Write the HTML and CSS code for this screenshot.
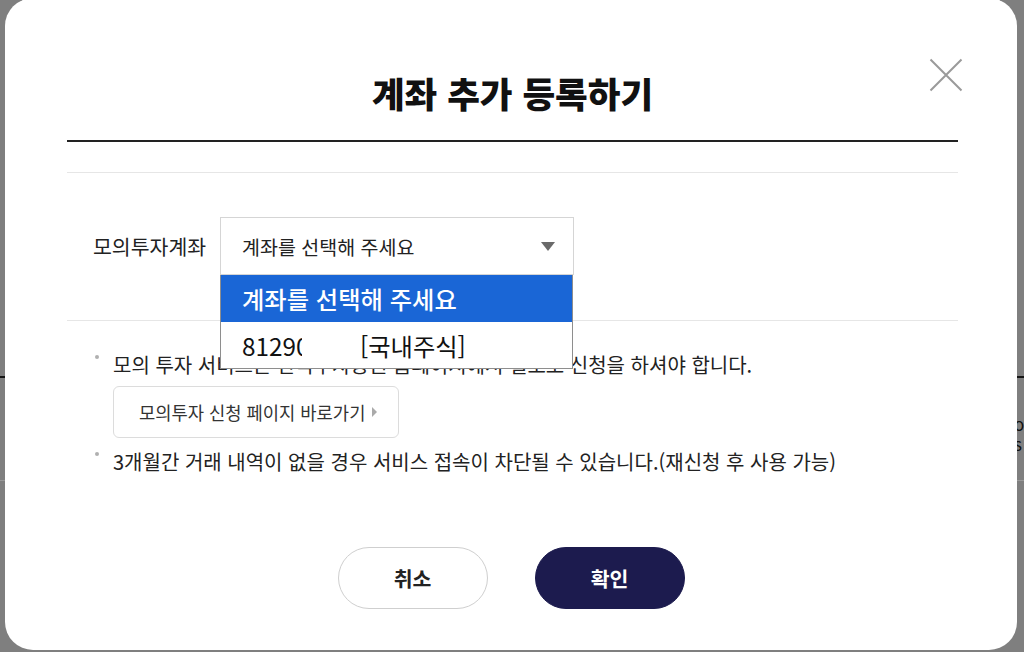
FILE: index.html
```html
<!DOCTYPE html>
<html lang="ko">
<head>
<meta charset="utf-8">
<link rel="stylesheet" href="styles.css">
</head>
<body>
<div class="backdrop">
  <div class="bg-rule-dark"></div>
  <div class="bg-text">o<br>s</div>
  <div class="bg-rule-light"></div>
</div>

<div class="modal">
  <div class="modal-head">
    <h1 class="modal-title">계좌 추가 등록하기</h1>
    <button class="close" aria-label="닫기">
      <svg width="34" height="34" viewBox="0 0 34 34"><path d="M1.5 1.5 L32.5 32.5 M32.5 1.5 L1.5 32.5" stroke="#9a9a9a" stroke-width="2" fill="none"/></svg>
    </button>
  </div>
  <div class="spacer"></div>

  <div class="field-row">
    <span class="field-label">모의투자계좌</span>
    <div class="select">
      <span class="select-value">계좌를 선택해 주세요</span>
      <span class="select-arrow"></span>
      <ul class="options">
        <li class="option selected">계좌를 선택해 주세요</li>
        <li class="option"><span class="acct">81290</span><span class="acct-type">[국내주식]</span></li>
      </ul>
    </div>
  </div>

  <ul class="notes">
    <li class="note">
      모의 투자 서비스는 한국투자증권 홈페이지에서 별도로 신청을 하셔야 합니다.
      <a class="link-btn" href="#">모의투자 신청 페이지 바로가기<span class="link-arrow"></span></a>
    </li>
    <li class="note">3개월간 거래 내역이 없을 경우 서비스 접속이 차단될 수 있습니다.(재신청 후 사용 가능)</li>
  </ul>

  <div class="actions">
    <button class="btn btn-cancel">취소</button>
    <button class="btn btn-ok">확인</button>
  </div>
</div>
</body>
</html>
```
FILE: styles.css
```css
* { box-sizing: border-box; }
html, body { margin: 0; padding: 0; }
body {
  width: 1024px;
  height: 652px;
  overflow: hidden;
  background: #7f7f7f;
  font-family: "Noto Sans CJK KR", "Noto Sans", sans-serif;
  color: #222;
}
.backdrop { padding-top: 376px; }
.bg-rule-dark { height: 2px; background: #151515; }
.bg-text {
  margin: 36px 0 0 1014px;
  font-size: 17px;
  line-height: 20px;
  color: #111;
}
.bg-rule-light { margin-top: 26px; height: 1px; background: #999; }

.modal {
  position: absolute;
  left: 5px;
  top: -2px;
  width: 1012px;
  height: 652px;
  background: #fff;
  border-radius: 28px;
  padding: 0 59px 0 62px;
}
.modal-head {
  position: relative;
  padding: 71px 0 23px;
  border-bottom: 2px solid #222;
}
.modal-title {
  margin: 0;
  text-align: center;
  font-size: 35.5px;
  line-height: 48px;
  font-weight: 900;
  color: #111;
}
.close {
  position: absolute;
  right: -5px;
  top: 60px;
  width: 34px;
  height: 34px;
  padding: 0;
  border: 0;
  background: none;
}
.close svg { display: block; }
.spacer { height: 31px; border-bottom: 1px solid #e6e6e6; }

.field-row {
  display: flex;
  align-items: center;
  margin-top: 44px;
  padding: 0 0 45px 26px;
  border-bottom: 1px solid #e6e6e6;
}
.field-label {
  width: 127px;
  font-size: 20.5px;
  color: #222;
}
.select {
  position: relative;
  width: 354px;
  height: 58px;
  border: 1px solid #d5d5d5;
  display: flex;
  align-items: center;
  padding: 0 18px 0 21px;
}
.select-value { flex: 1; font-size: 19.5px; color: #222; }
.select-arrow {
  width: 0; height: 0;
  border-left: 7px solid transparent;
  border-right: 7px solid transparent;
  border-top: 9px solid #6a6a6a;
}
.options {
  position: absolute;
  left: -1px;
  top: 57px;
  width: 353px;
  margin: 0;
  padding: 0;
  list-style: none;
  background: #fff;
  border: 1px solid #8e8e8e;
  border-top: 0;
  z-index: 2;
}
.option {
  height: 46px;
  display: flex;
  align-items: center;
  padding-left: 21px;
  font-size: 24.3px;
  color: #111;
}
.option.selected { background: #1a66d6; color: #fff; height: 47px; font-weight: 500; }
.acct { display: inline-block; width: 60px; overflow: hidden; white-space: nowrap; }
.acct-type { margin-left: 58px; }

.notes {
  list-style: none;
  margin: 30px 0 0;
  padding: 0 0 0 46px;
}
.note {
  position: relative;
  font-size: 20px;
  line-height: 28px;
  color: #222;
}
.note + .note { margin-top: 10px; }
.note::before {
  content: "";
  position: absolute;
  left: -18px;
  top: 4px;
  width: 4px;
  height: 4px;
  border-radius: 50%;
  background: #b0b0b0;
}
.link-btn {
  display: flex;
  align-items: center;
  width: 286px;
  height: 52px;
  margin-top: 7px;
  padding-left: 25px;
  border: 1px solid #dcdcdc;
  border-radius: 6px;
  font-size: 17.7px;
  color: #333;
  text-decoration: none;
}
.link-arrow {
  margin-left: 7px;
  width: 0; height: 0;
  border-top: 5px solid transparent;
  border-bottom: 5px solid transparent;
  border-left: 5px solid #aaa;
}

.actions {
  display: flex;
  justify-content: center;
  gap: 47px;
  margin-top: 71px;
  padding-left: 0;
  padding-right: 3px;
}
.btn {
  width: 150px;
  height: 62px;
  border-radius: 31px;
  font-family: inherit;
  font-size: 20.5px;
  font-weight: 700;
}
.btn-cancel { background: #fff; border: 1px solid #cfcfcf; color: #222; }
.btn-ok { background: #1c1b4e; border: 1px solid #1c1b4e; color: #fff; }
```
